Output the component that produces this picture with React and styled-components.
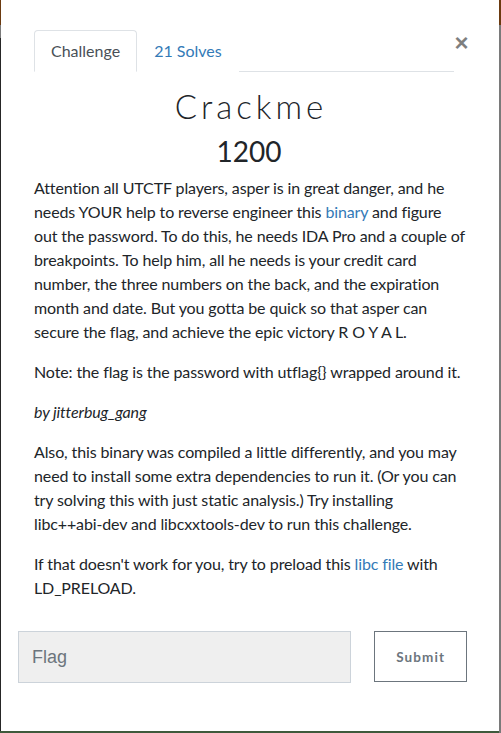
import React from "react";
import styled, { createGlobalStyle } from "styled-components";

const GlobalStyle = createGlobalStyle`
    html, body {
        margin: 0;
        padding: 0;
    }
    body {
        font-family: Lato, "Noto Sans", sans-serif;
        background: #262626;
    }
`

const Backdrop = styled.div`
    width: 501px;
    height: 733px;
    box-sizing: border-box;
    padding: 0 2px 2px 1px;
    background:
        linear-gradient(to bottom, #6b3a10 0, #6b3a10 25px, #7a7a7a 25px, #7a7a7a 38px, transparent 38px) left / 1px 100% no-repeat,
        linear-gradient(to bottom, #6b3a10 0, #6b3a10 25px, #7a7a7a 25px) right / 2px 100% no-repeat,
        linear-gradient(to bottom, #262626 0, #262626 731px, #3f5a3c 731px);
`

const Modal = styled.div`
    height: 731px;
    background: #fff;
    display: flex;
    flex-direction: column;
`

const Body = styled.div`
    padding: 30px 34px 0 32px;
    color: #212529;
`

const TabRow = styled.div`
    display: flex;
    align-items: flex-start;
    margin-right: -4px;
    padding-left: 1px;
`

const Tabs = styled.ul`
    display: flex;
    list-style: none;
    margin: 0;
    padding: 0;
    width: 420px;
    border-bottom: 1px solid #dee2e6;
`

const Tab = styled.li`
    margin-bottom: -1px;
    padding: 8px 16px;
    font-size: 16px;
    line-height: 24px;
    border: 1px solid ${p => (p.$active ? "#dee2e6" : "transparent")};
    border-bottom-color: ${p => (p.$active ? "#fff" : "transparent")};
    border-radius: 4px 4px 0 0;
    background: #fff;
    color: ${p => (p.$active ? "#495057" : "#337ab7")};
`

const Close = styled.button`
    margin-left: auto;
    margin-top: 1px;
    padding: 0;
    border: 0;
    background: none;
    font-family: "Liberation Sans", sans-serif;
    font-size: 24px;
    line-height: 24px;
    font-weight: 700;
    color: #000;
    opacity: 0.5;
    width: 15px;
`

const Title = styled.h3`
    margin: 15px 0 8px;
    padding-left: 4px;
    text-align: center;
    font-size: 33px;
    line-height: 1.2;
    font-weight: 300;
    letter-spacing: 4px;
    color: #212529;
`

const Points = styled.h4`
    margin: 0 0 8px;
    text-align: center;
    font-size: 28px;
    line-height: 1.2;
    font-weight: 400;
`

const Text = styled.p`
    margin: 0 0 16px;
    padding-left: 1px;
    font-size: 16px;
    line-height: 24px;
    letter-spacing: -0.12px;
    font-style: ${p => (p.$italic ? "italic" : "normal")};
`

const Link = styled.a`
    color: #337ab7;
    text-decoration: none;
`

const Form = styled.form`
    display: flex;
    align-items: flex-start;
    gap: 23px;
    padding: 15px 32px 0 17px;
`

const FlagInput = styled.input`
    box-sizing: border-box;
    width: 334px;
    height: 52px;
    padding: 0 13px;
    border: 1px solid #ccd3da;
    background: #efefef;
    font-family: "Liberation Sans", Arial, sans-serif;
    font-size: 18px;
    color: #495057;
    outline: none;

    &::placeholder {
        color: #6c757d;
    }
`

const SubmitButton = styled.button`
    box-sizing: border-box;
    width: 93px;
    height: 51px;
    border: 1px solid #6c757d;
    background: #fff;
    font-family: Lato, sans-serif;
    font-size: 13.5px;
    font-weight: 700;
    letter-spacing: 1.1px;
    color: #6c757d;
`

export default class App extends React.Component {
    render() {
        return (
            <>
                <GlobalStyle />
                <Backdrop>
                    <Modal>
                        <Body>
                            <TabRow>
                                <Tabs>
                                    <Tab $active>Challenge</Tab>
                                    <Tab>21 Solves</Tab>
                                </Tabs>
                                <Close aria-label="Close">×</Close>
                            </TabRow>
                            <Title>Crackme</Title>
                            <Points>1200</Points>
                            <Text>
                                Attention all UTCTF players, asper is in great danger, and he needs YOUR help to reverse engineer this <Link href="#">binary</Link> and figure out the password. To do this, he needs IDA Pro and a couple of breakpoints. To help him, all he needs is your credit card number, the three numbers on the back, and the expiration month and date. But you gotta be quick so that asper can secure the flag, and achieve the epic victory R O Y A L.
                            </Text>
                            <Text>Note: the flag is the password with utflag{"{}"} wrapped around it.</Text>
                            <Text $italic>by jitterbug_gang</Text>
                            <Text>
                                Also, this binary was compiled a little differently, and you may need to install some extra dependencies to run it. (Or you can try solving this with just static analysis.) Try installing libc++abi-dev and libcxxtools-dev to run this challenge.
                            </Text>
                            <Text>
                                If that doesn't work for you, try to preload this <Link href="#">libc file</Link> with LD_PRELOAD.
                            </Text>
                        </Body>
                        <Form onSubmit={e => e.preventDefault()}>
                            <FlagInput placeholder="Flag" />
                            <SubmitButton type="submit">Submit</SubmitButton>
                        </Form>
                    </Modal>
                </Backdrop>
            </>
        );
    }
}
